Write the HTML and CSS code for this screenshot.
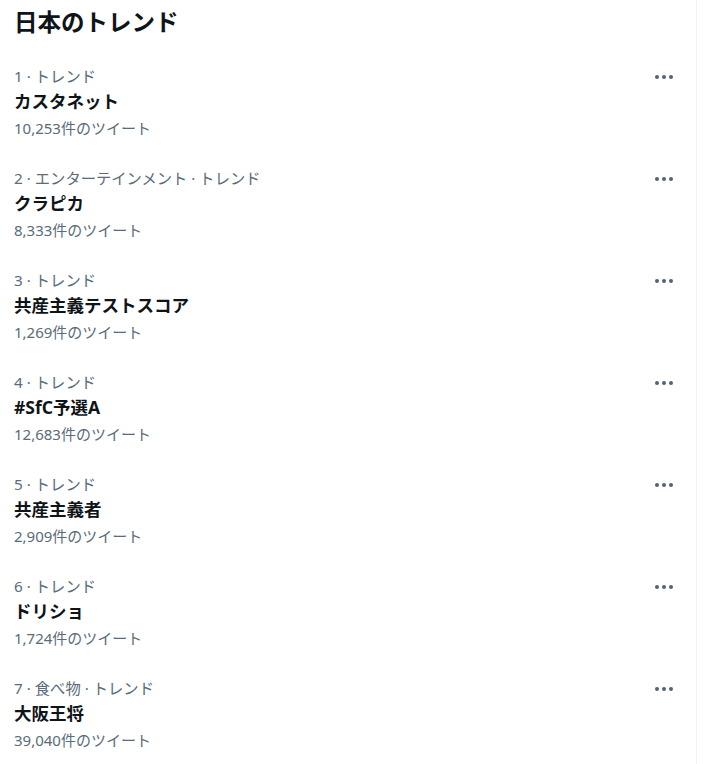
FILE: index.html
```html
<!DOCTYPE html>
<html lang="ja">
<head>
<meta charset="utf-8">
<link rel="stylesheet" href="styles.css">
</head>
<body>
<div class="panel">
  <h2 class="title">日本のトレンド</h2>
  <div class="trend">
    <div class="meta-row"><span class="meta">1 · トレンド</span><svg class="more" viewBox="0 0 20 8" width="20" height="8"><circle cx="3" cy="4" r="2"/><circle cx="10" cy="4" r="2"/><circle cx="17" cy="4" r="2"/></svg></div>
    <div class="name">カスタネット</div>
    <div class="count">10,253件のツイート</div>
  </div>
  <div class="trend">
    <div class="meta-row"><span class="meta">2 · エンターテインメント · トレンド</span><svg class="more" viewBox="0 0 20 8" width="20" height="8"><circle cx="3" cy="4" r="2"/><circle cx="10" cy="4" r="2"/><circle cx="17" cy="4" r="2"/></svg></div>
    <div class="name">クラピカ</div>
    <div class="count">8,333件のツイート</div>
  </div>
  <div class="trend">
    <div class="meta-row"><span class="meta">3 · トレンド</span><svg class="more" viewBox="0 0 20 8" width="20" height="8"><circle cx="3" cy="4" r="2"/><circle cx="10" cy="4" r="2"/><circle cx="17" cy="4" r="2"/></svg></div>
    <div class="name">共産主義テストスコア</div>
    <div class="count">1,269件のツイート</div>
  </div>
  <div class="trend">
    <div class="meta-row"><span class="meta">4 · トレンド</span><svg class="more" viewBox="0 0 20 8" width="20" height="8"><circle cx="3" cy="4" r="2"/><circle cx="10" cy="4" r="2"/><circle cx="17" cy="4" r="2"/></svg></div>
    <div class="name">#SfC予選A</div>
    <div class="count">12,683件のツイート</div>
  </div>
  <div class="trend">
    <div class="meta-row"><span class="meta">5 · トレンド</span><svg class="more" viewBox="0 0 20 8" width="20" height="8"><circle cx="3" cy="4" r="2"/><circle cx="10" cy="4" r="2"/><circle cx="17" cy="4" r="2"/></svg></div>
    <div class="name">共産主義者</div>
    <div class="count">2,909件のツイート</div>
  </div>
  <div class="trend">
    <div class="meta-row"><span class="meta">6 · トレンド</span><svg class="more" viewBox="0 0 20 8" width="20" height="8"><circle cx="3" cy="4" r="2"/><circle cx="10" cy="4" r="2"/><circle cx="17" cy="4" r="2"/></svg></div>
    <div class="name">ドリショ</div>
    <div class="count">1,724件のツイート</div>
  </div>
  <div class="trend">
    <div class="meta-row"><span class="meta">7 · 食べ物 · トレンド</span><svg class="more" viewBox="0 0 20 8" width="20" height="8"><circle cx="3" cy="4" r="2"/><circle cx="10" cy="4" r="2"/><circle cx="17" cy="4" r="2"/></svg></div>
    <div class="name">大阪王将</div>
    <div class="count">39,040件のツイート</div>
  </div>
</div>
</body>
</html>
```
FILE: styles.css
```css
html, body {
  margin: 0;
  padding: 0;
  background: #ffffff;
  height: 100%;
  overflow: hidden;
}
body {
  font-family: "Noto Sans", "Noto Sans CJK JP", sans-serif;
  color: #0f1419;
}
.panel {
  width: 696px;
  min-height: 764px;
  border-right: 1px solid #eff3f4;
  box-sizing: content-box;
}
.title {
  margin: 0;
  padding: 7px 14px 15px;
  font-size: 23.5px;
  line-height: 30px;
  font-weight: 700;
}
.trend {
  padding: 13px 22px 13px 14px;
}
.meta-row {
  display: flex;
  justify-content: space-between;
  align-items: center;
  height: 22px;
}
.meta {
  font-size: 15.3px;
  line-height: 22px;
  color: #5b6b78;
}
.more {
  fill: #536471;
  display: block;
  margin-top: 2px;
}
.name {
  font-size: 17.5px;
  line-height: 28px;
  font-weight: 700;
}
.count {
  font-size: 15px;
  line-height: 26px;
  color: #5b6b78;
}
```
